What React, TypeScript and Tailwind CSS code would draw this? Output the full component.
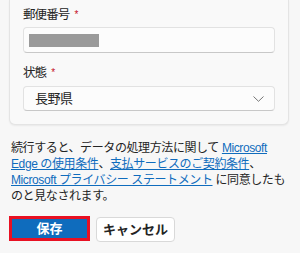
const font = { fontFamily: '"Liberation Sans", "Noto Sans CJK JP", sans-serif' };

const Label = ({ text }: { text: string }) => (
  <div className="flex h-4 items-center text-[12.5px] leading-4 tracking-[-0.9px] text-[#242424]">
    <span>{text}</span>
    <span className="ml-[5px] text-[10px] text-[#c50f1f]">*</span>
  </div>
);

export default function App() {
  return (
    <div className="min-h-screen w-[300px] bg-[#f7f7f7]" style={font}>
      <div className="mx-[9px] w-[280px] rounded-b-[6px] border border-t-0 border-[#e4e4e4] bg-[#f9f9f9] px-[13px] pt-[7px] pb-[13px] shadow-[0_1px_2px_rgba(0,0,0,0.06)]">
        <Label text="郵便番号" />
        <div className="mt-1 flex h-[26px] items-center rounded-[4px] border border-[#e2e2e2] border-b-[#c8c8c8] bg-[#fcfcfc] pl-[5px]">
          <div className="h-[13px] w-[70px] bg-[#9a9a9a]" />
        </div>
        <div className="mt-3">
          <Label text="状態" />
        </div>
        <div className="mt-[5px] flex h-[25px] items-center justify-between rounded-[4px] border border-[#e2e2e2] border-b-[#c8c8c8] bg-[#fcfcfc] pr-[10px] pl-[11px]">
          <span className="text-[13px] tracking-[-0.5px] text-[#242424]">長野県</span>
          <svg width="11" height="6" viewBox="0 0 11 6" fill="none" stroke="#666" strokeWidth="0.9">
            <path d="M0.5 0.5 L5.5 5.3 L10.5 0.5" />
          </svg>
        </div>
      </div>

      <p className="mt-[15px] px-[11px] text-[12px] leading-4 tracking-[-0.4px] whitespace-nowrap text-[#242424]">
        続行すると、データの処理方法に関して{" "}
        <a className="text-[#0f6cbd] underline">Microsoft</a>
        <br />
        <a className="text-[#0f6cbd] underline">Edge の使用条件</a>、
        <a className="text-[#0f6cbd] underline">支払サービスのご契約条件</a>、
        <br />
        <a className="text-[#0f6cbd] underline">Microsoft プライバシー ステートメント</a> に同意したも
        <br />
        のと見なされます。
      </p>

      <div className="mt-3 flex items-start gap-[6px] pl-[9px]">
        <button className="flex h-[25px] w-[81px] items-center justify-center border-[3px] border-[#e81123] bg-[#0f6cbd] text-[13px] font-bold text-white">
          保存
        </button>
        <button className="mt-px flex h-[25px] w-[79px] items-center justify-center rounded-[4px] border border-[#d9d9d9] bg-white text-[13px] font-bold text-[#242424]">
          キャンセル
        </button>
      </div>
    </div>
  );
}
